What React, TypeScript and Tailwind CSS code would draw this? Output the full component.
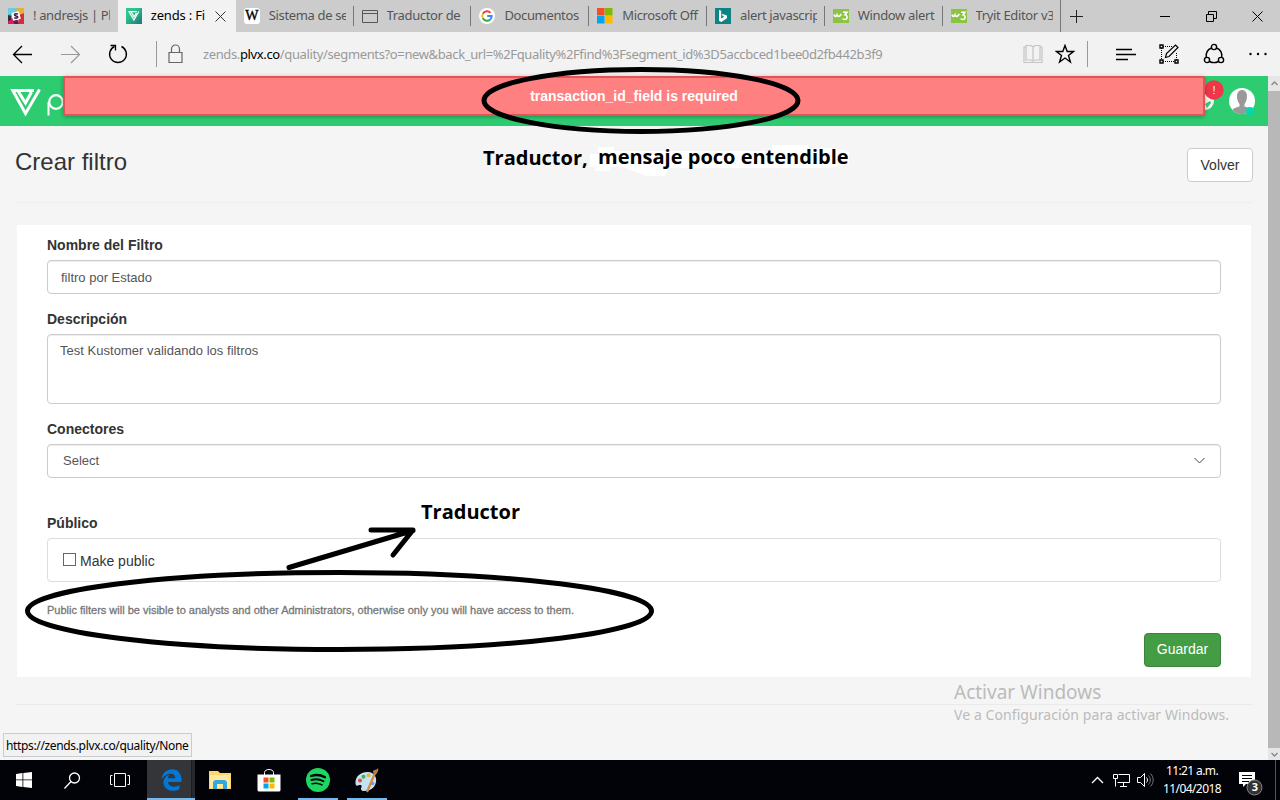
import React from "react";

type TabItem = { title: string; icon: React.ReactNode; active?: boolean; divider?: boolean };

const Slack = () => (
  <svg width="16" height="16" viewBox="0 0 16 16">
    <path d="M0 0h5l3 8-8 3z" fill="#2bb3a3" />
    <path d="M5 0h11v5L8 8z" fill="#ecb32d" />
    <path d="M0 0h9l-1 4-8 3z" fill="#6ecadc" />
    <path d="M9 0h7v5l-6-1z" fill="#e8b02c" />
    <path d="M16 5v11h-6l1-9z" fill="#d72b3f" />
    <path d="M0 11l8-2 3 7H0z" fill="#e01765" />
    <path d="M0 7l3 1v4l-3 1z" fill="#2b2f3a" />
    <path d="M5 12l4-1 1.500 5H6.500z" fill="#5a1f3a" />
    <rect x="4" y="4" width="8" height="8" rx="0.500" fill="#fff" transform="rotate(-14 8 8)" />
    <path d="M10 6.200C8.700 5.500 6.500 5.600 6.500 6.900c0 1.300 3.300.7 3.300 2.100 0 1.300-2.100 1.400-3.500.7" stroke="#3a1538" strokeWidth="1.500" fill="none" />
  </svg>
);
const PlvxFav = () => (
  <svg width="16" height="16" viewBox="0 0 16 16">
    <defs>
      <linearGradient id="fav" x1="0" y1="0" x2="1" y2="1">
        <stop offset="0.300" stopColor="#2fc58c" />
        <stop offset="0.900" stopColor="#22807c" />
      </linearGradient>
    </defs>
    <rect width="16" height="16" fill="url(#fav)" />
    <path d="M10.800 3.700H3L7.900 12l4.900-8.500M5.300 4.200L8 8.800l2.400-3.600" stroke="#fff" strokeWidth="1.200" fill="none" />
  </svg>
);
const Wiki = () => (
  <span className="flex h-4 w-4 items-center justify-center rounded-[3px] bg-white font-['Liberation_Serif',serif] text-[14px] leading-none text-black [-webkit-text-stroke:0.4px_#000]">W</span>
);
const PageIcon = () => (
  <svg width="16" height="13" viewBox="0 0 16 13" fill="none" stroke="#555">
    <path d="M.5.5h15v12H.5zM.5 3.500h15" />
  </svg>
);
const Google = () => (
  <svg width="16" height="16" viewBox="0 0 16 16">
    <circle cx="8" cy="8" r="8" fill="#fff" />
    <g fill="none" strokeWidth="2">
      <path d="M11.500 4.800A4.700 4.700 0 0 0 3.900 5.700" stroke="#ea4335" />
      <path d="M3.900 5.700a4.700 4.700 0 0 0 0 4.600" stroke="#fbbc05" />
      <path d="M3.900 10.300a4.700 4.700 0 0 0 7.300 1.200" stroke="#34a853" />
      <path d="M11.200 11.500A4.700 4.700 0 0 0 12.700 8H8.200" stroke="#4285f4" />
    </g>
  </svg>
);
const MsFlag = () => (
  <svg width="16" height="16" viewBox="0 0 16 16">
    <path d="M0 0h7.500v7.500H0z" fill="#f25022" />
    <path d="M8 0h7.500v7.500H8z" fill="#7fba00" />
    <path d="M0 8h7.500v7.500H0z" fill="#00a4ef" />
    <path d="M8 8h7.500v7.500H8z" fill="#ffb900" />
  </svg>
);
const Bing = () => (
  <svg width="16" height="16" viewBox="0 0 16 16">
    <rect width="16" height="16" fill="#0c8484" />
    <path d="M4 2l2.200.8v7.600l3-1.700-1.500-.7-1-2.300 5.300 1.900v2.700L6.200 14 4 12.700z" fill="#fff" />
  </svg>
);
const W3 = () => (
  <svg width="16" height="14" viewBox="0 0 16 14">
    <rect width="16" height="14" fill="#8ac440" />
    <path d="M1 5.500c.5 2.500 2 2.500 3 .3.600 2.200 2.500 2.200 4.300-.8M10 3.200h4l-2 2.600c3 .2 2.600 4.700-.3 4.700-1 0-1.700-.4-2-1" stroke="#fff" strokeWidth="1.600" fill="none" />
  </svg>
);

const tabs: TabItem[] = [
  { title: "! andresjs | Pla", icon: <Slack /> },
  { title: "zends : Fi", icon: <PlvxFav />, active: true },
  { title: "Sistema de se", icon: <Wiki />, divider: true },
  { title: "Traductor de", icon: <PageIcon />, divider: true },
  { title: "Documentos", icon: <Google />, divider: true },
  { title: "Microsoft Off", icon: <MsFlag />, divider: true },
  { title: "alert javascrip", icon: <Bing />, divider: true },
  { title: "Window alert", icon: <W3 />, divider: true },
  { title: "Tryit Editor v3", icon: <W3 /> },
];

function Tab({ tab }: { tab: TabItem }) {
  return (
    <div className={tab.active ? "flex h-8 w-[118px] shrink-0 items-center bg-[#f2f2f2] pl-2 text-black" : "flex h-8 w-[117.8px] shrink-0 items-center pl-2 text-[#555]"}>
      <span className="flex w-4 justify-center">{tab.icon}</span>
      <span className={tab.active ? "ml-[9px] w-[62px] overflow-hidden whitespace-nowrap tracking-[-0.2px]" : "ml-[9px] w-[77px] overflow-hidden whitespace-nowrap"}>{tab.title}</span>
      {tab.active && (
        <svg className="ml-[2px]" width="11" height="11" viewBox="0 0 11 11" stroke="#333" fill="none">
          <path d="M.5.5l10 10M10.500.5l-10 10" />
        </svg>
      )}
      {tab.divider && <span className="ml-auto h-5 w-px bg-[#777]" />}
    </div>
  );
}

function TabStrip() {
  return (
    <div className="flex h-8 items-center bg-[#ccc] text-[13px] tracking-[-0.35px]">
      {tabs.map((t) => (
        <Tab key={t.title} tab={t} />
      ))}
      <span className="h-8 w-px bg-[#777]" />
      <svg className="ml-[9px]" width="13" height="13" viewBox="0 0 13 13" stroke="#222">
        <path d="M6.500 0v13M0 6.500h13" />
      </svg>
      <svg className="ml-[77px]" width="10" height="11" viewBox="0 0 10 11" stroke="#000">
        <path d="M0 5.500h10" />
      </svg>
      <svg className="ml-9" width="11" height="11" viewBox="0 0 11 11" stroke="#000" fill="none">
        <path d="M.5 3.500h7v7h-7zM2.500 3.500v-3h8v7h-3" />
      </svg>
      <svg className="ml-[35px]" width="11" height="11" viewBox="0 0 11 11" stroke="#000">
        <path d="M.5.5l10 10M10.500.5l-10 10" />
      </svg>
    </div>
  );
}

function AddressBar() {
  return (
    <div className="flex h-11 items-center bg-[#f2f2f2] pl-3">
      <svg width="120" height="26" viewBox="0 0 120 26" fill="none">
        <path d="M20 13.500H1.500M10 5l-8.500 8.500L10 22" stroke="#000" strokeWidth="1.300" />
        <path d="M49 13.500h18.500M59 5l8.500 8.500L59 22" stroke="#999" strokeWidth="1.200" />
        <path d="M102.500 5.500A8.400 8.400 0 1 0 109.500 5.500" stroke="#000" strokeWidth="1.400" />
        <path d="M98.500 4.500h5v5" stroke="#000" strokeWidth="1.300" />
      </svg>
      <span className="ml-6 h-[26px] w-px bg-[#999]" />
      <svg className="ml-[11px]" width="15" height="20" viewBox="0 0 15 20" fill="none" stroke="#666" strokeWidth="1.200">
        <path d="M1 8.500h13v10H1zM3.500 8.500V5a4 4 0 0 1 8 0v3.500" />
      </svg>
      <span className="ml-5 mt-[2px] w-[800px] whitespace-nowrap text-[13px] tracking-[-0.37px] text-[#999]">
        zends.<span className="text-black">plvx.co</span>/quality/segments?o=new&amp;back_url=%2Fquality%2Ffind%3Fsegment_id%3D5accbced1bee0d2fb442b3f9
      </span>
      <svg className="ml-5 shrink-0" width="20" height="20" viewBox="0 0 20 20" fill="none" stroke="#c4c4c4" strokeWidth="1.200">
        <path d="M3 3H1v15.500h18V3h-2M10 3v13M3 1.500h5L10 3l2-1.500h5V16h-5l-2 1-2-1H3z" />
      </svg>
      <svg className="ml-3 shrink-0" width="20" height="20" viewBox="0 0 20 20" fill="none" stroke="#000" strokeWidth="1.400">
        <path d="M10 1.500l2.200 6h6.300l-5 4 1.900 6.500-5.400-4-5.400 4 1.900-6.500-5-4h6.300z" />
      </svg>
      <span className="ml-3 h-[26px] w-px shrink-0 bg-[#999]" />
      <svg className="-mt-px ml-7 shrink-0" width="21" height="14" viewBox="0 0 21 14" stroke="#000" strokeWidth="1.400">
        <path d="M0 2.500h16M0 7.500h20M0 12.500h12" />
      </svg>
      <svg className="ml-[22px] shrink-0" width="20" height="20" viewBox="0 0 20 20" fill="none" stroke="#000">
        <path d="M4 2.500h9M2.500 4v12M4 17.500h12M17.500 9v7" strokeDasharray="1 1" />
        <path d="M1 1h3v3H1zM1 16h3v3H1zM16 16h3v3h-3z" strokeWidth="1.400" />
        <path d="M6.500 13.500l1-4L16.500 1l2.500 2.500L10 12.500z" strokeWidth="1.200" />
      </svg>
      <svg className="ml-6 shrink-0" width="22" height="22" viewBox="0 0 22 22" fill="none" stroke="#000" strokeWidth="1.400">
        <circle cx="11" cy="4" r="2.600" />
        <circle cx="4" cy="17" r="2.600" />
        <circle cx="18" cy="17" r="2.600" />
        <path d="M8.500 5C4.500 6.500 2.800 10 3.200 14.300M13.500 5c4 1.500 5.700 5 5.300 9.300M6.500 18.500c3 1.500 6 1.500 9 0" />
      </svg>
      <svg className="ml-6 shrink-0" width="18" height="4" viewBox="0 0 18 4">
        <circle cx="1.500" cy="2" r="1.200" />
        <circle cx="9" cy="2" r="1.200" />
        <circle cx="16.500" cy="2" r="1.200" />
      </svg>
    </div>
  );
}

function SiteHeader() {
  return (
    <header className="relative flex h-[50px] items-start bg-[#2ecc71]">
      <svg width="110" height="50" viewBox="0 0 110 50" fill="none" stroke="#fff">
        <path d="M34 14.500H12.800L25.500 37.500 39.500 13.500M18 15l7.500 12 6-11" strokeWidth="3" />
        <circle cx="56" cy="26" r="6.800" strokeWidth="2.200" />
        <path d="M48.500 26v13.500" strokeWidth="2" />
      </svg>
      <svg className="ml-auto" width="70" height="50" viewBox="0 0 70 50">
        <circle cx="7" cy="25" r="9" fill="#f2f4ef" />
        <path d="M7 28l5-3 1 2-4 5z" fill="#2ecc71" />
        <circle cx="16" cy="14" r="9.700" fill="#f0364a" />
        <circle cx="44" cy="25" r="13" fill="#fff" />
        <path d="M39 20c0-8 10-8 10 0 0 4-1 6-2.500 8v2.500c4 1 6 2 7 3.500a13 13 0 0 1-19 0c1-1.500 3-2.500 7-3.500V28c-1.500-2-2.500-4-2.500-8z" fill="#999" />
        <circle cx="52" cy="35" r="4" fill="#00d8b4" />
      </svg>
      <span className="absolute right-[50px] top-[6px] w-2 text-center text-[11px] leading-4 text-white">!</span>
      <div className="absolute left-[63px] top-0 flex h-10 w-[1142px] items-center justify-center rounded-[2px] border-2 border-[#e05656] bg-[#ff8080] text-[14px] font-bold text-white shadow-[0_1px_4px_rgba(0,0,0,0.3)]">
        transaction_id_field is required
      </div>
    </header>
  );
}

const field = "rounded-[4px] border border-[#ccc] bg-white text-[13px] text-[#555] shadow-[inset_0_1px_1px_rgba(0,0,0,0.075)]";
const label = "text-[14px] font-bold leading-5 text-[#333]";

function FilterForm() {
  return (
    <section className="mx-[17px] mt-[22px] flex h-[452px] flex-col bg-white px-[30px] pt-[10px]">
      <div className={label}>Nombre del Filtro</div>
      <div className={`mt-[5px] flex h-[34px] items-center pl-[13px] pt-[2px] ${field}`}>filtro por Estado</div>
      <div className={`mt-[15px] ${label}`}>Descripción</div>
      <div className={`mt-[5px] h-[70px] pl-3 pt-[6px] leading-5 tracking-[0.03px] ${field}`}>Test Kustomer validando los filtros</div>
      <div className={`mt-[15px] ${label}`}>Conectores</div>
      <div className={`mt-[5px] flex h-[34px] items-center justify-between pl-[15px] pr-[14px] ${field}`}>
        Select
        <svg width="13" height="8" viewBox="0 0 13 8" fill="none" stroke="#444">
          <path d="M1.500 1l5 5 5-5" />
        </svg>
      </div>
      <div className={`mt-[35px] ${label}`}>Público</div>
      <div className="mt-[5px] flex h-11 items-center rounded-[4px] border border-[#ddd] pl-[15px] text-[14px] text-[#333]">
        <span className="mb-[2px] h-[13px] w-[13px] border border-[#666] bg-white" />
        <span className="ml-1 mt-[2px]">Make public</span>
      </div>
      <div className="mt-[18px] whitespace-nowrap text-[11px] leading-5 text-[#777] [-webkit-text-stroke:0.3px_#777]">
        Public filters will be visible to analysts and other Administrators, otherwise only you will have access to them.
      </div>
      <div className="mt-[13px] flex h-[34px] w-[77px] items-center justify-center self-end rounded-[4px] border border-[#398439] bg-[#449d44] pb-px text-[14px] text-white">Guardar</div>
    </section>
  );
}

function ScrollBar() {
  return (
    <div className="flex w-3 flex-col bg-[#b8b8b8]">
      <div className="flex h-[15px] items-center justify-center bg-[#e6e6e6]">
        <svg width="7" height="5" viewBox="0 0 7 5" fill="none" stroke="#888" strokeWidth="1.300">
          <path d="M.5 4l3-3 3 3" />
        </svg>
      </div>
      <div className="mt-auto flex h-3 items-center justify-center bg-[#e6e6e6]">
        <svg width="7" height="5" viewBox="0 0 7 5" fill="none" stroke="#888" strokeWidth="1.300">
          <path d="M.5 1l3 3 3-3" />
        </svg>
      </div>
    </div>
  );
}

function Annotations() {
  return (
    <>
      <svg className="pointer-events-none absolute left-0 top-0" width="1280" height="800" viewBox="0 0 1280 800" fill="none">
        <path d="M590 154h8v-7h16v4h158v-6h36v3h28l13 4v12l-19 4H668l-3 8h-18l-24-9h-13v4h-15v-4h-5z" fill="#fff" />
        <g stroke="#000" strokeWidth="5" strokeLinecap="round">
          <ellipse cx="641" cy="100.500" rx="157" ry="31" />
          <ellipse cx="339.500" cy="611" rx="312" ry="38.500" />
          <path d="M289 567.500L413 530.500M371 530h42l-20 25" strokeLinejoin="round" />
        </g>
      </svg>
      <div className="absolute left-[483px] top-[144px] whitespace-nowrap font-['Open_Sans',sans-serif] text-[20px] font-bold leading-7 text-black">Traductor,</div>
      <div className="absolute left-[598px] top-[143px] whitespace-nowrap font-['Open_Sans',sans-serif] text-[20px] font-bold leading-7 text-black">mensaje poco entendible</div>
      <div className="absolute left-[421px] top-[498px] whitespace-nowrap font-['Open_Sans',sans-serif] text-[20px] font-bold leading-7 text-black">Traductor</div>
    </>
  );
}

function TaskBar() {
  return (
    <div className="flex h-10 items-center bg-[#010308] text-white">
      <svg className="ml-4" width="16" height="16" viewBox="0 0 16 16" fill="#fff">
        <path d="M0 2l6.500-1v6.500H0zM7.300.900L16 0v7.500H7.300zM0 8.300h6.500V15L0 14zM7.300 8.300H16V16l-8.700-1z" />
      </svg>
      <svg className="ml-8" width="17" height="17" viewBox="0 0 17 17" fill="none" stroke="#fff" strokeWidth="1.300">
        <circle cx="10.500" cy="6" r="5" />
        <path d="M7 9.500L.5 16.500" />
      </svg>
      <svg className="ml-[29px]" width="20" height="14" viewBox="0 0 20 14" fill="none" stroke="#fff">
        <path d="M4.500.5h11v13h-11zM2.500 2.500h-2v9h2M17.500 2.500h2v9h-2" />
      </svg>
      <div className="ml-[17px] flex h-10 w-12 items-center border-b-2 border-[#76b9ed] bg-[#333539] pl-[14px]">
        <svg className="mt-[2px]" width="21" height="22" viewBox="0 0 21 22" fill="#0078d7">
          <path d="M.5 10C2-2.500 20-3.500 20.500 10v3H7c.5 5 7 6 11.500 3v4.300C11 24 2.500 20.500 2.500 13.500 2.500 9.500 5 6.800 8.500 5.500 7.300 6.800 7 8.300 7 9.300h7.300C14.300 3 5.500 3.500.5 10z" />
        </svg>
        <span className="ml-auto h-full w-[4px] border-l border-[#1c1d20] bg-[#27292d]" />
      </div>
      <svg className="ml-[14px]" width="22" height="20" viewBox="0 0 22 20">
        <path d="M0 1h9l2 2h11v16H0z" fill="#fdd56a" />
        <path d="M1 5h20v13H1z" fill="#ffe9a0" />
        <path d="M4 19v-7l2-2h10l2 2v7h-4v-5H8v5z" fill="#33a8e0" />
      </svg>
      <svg className="ml-[26px]" width="24" height="24" viewBox="0 0 24 24">
        <path d="M7.500 7V4.500C7.500.500 16.500.500 16.500 4.500V7" fill="none" stroke="#fff" />
        <path d="M.5 6.500h23V22a1.500 1.500 0 0 1-1.500 1.500H2A1.500 1.500 0 0 1 .5 22z" fill="#fff" />
        <path d="M6.500 9.500h5v5h-5z" fill="#f25022" />
        <path d="M12.500 9.500h5v5h-5z" fill="#7fba00" />
        <path d="M6.500 15.500h5v5h-5z" fill="#00a4ef" />
        <path d="M12.500 15.500h5v5h-5z" fill="#ffb900" />
      </svg>
      <div className="ml-[17px] flex h-10 w-10 items-center justify-center border-b-2 border-[#76b9ed] pt-[2px]">
        <svg width="24" height="24" viewBox="0 0 24 24" fill="none" stroke="#010308" strokeLinecap="round">
          <circle cx="12" cy="12" r="12" fill="#1ed760" stroke="none" />
          <path d="M5 8c4.500-1.500 10-1 14 1.300" strokeWidth="2.300" />
          <path d="M5.500 12c4-1.200 8.500-.7 12 1.300" strokeWidth="1.900" />
          <path d="M6 15.700c3.500-1 7-.6 10 1.200" strokeWidth="1.500" />
        </svg>
      </div>
      <div className="ml-[9px] flex h-10 w-10 items-center justify-center border-b-2 border-[#76b9ed] pt-[2px]">
        <svg width="26" height="25" viewBox="0 0 26 25">
          <path d="M1.500 15C1 8 8 3.500 14 4c6 .5 9 5 8 10-1 6-6 9-12 9-3 0-3.500-2-2.500-4S6 16.500 4 17.500 1.500 16.500 1.500 15z" fill="#c5e2f3" />
          <circle cx="6" cy="12.500" r="2" fill="#e64a3b" />
          <circle cx="9.500" cy="8.700" r="2" fill="#46ad4b" />
          <circle cx="14.500" cy="7.200" r="2" fill="#f0b51e" />
          <circle cx="18.500" cy="15.500" r="1.800" fill="#6f9ade" />
          <path d="M21 5L13 24" stroke="#d88a3d" strokeWidth="2.200" />
          <path d="M19 4c0-3 3-1 5-4 1 3-1 6-3.500 7z" fill="#b9784a" />
        </svg>
      </div>
      <svg className="ml-auto" width="13" height="8" viewBox="0 0 13 8" fill="none" stroke="#fff" strokeWidth="1.400">
        <path d="M1 7l5.500-5.500L12 7" />
      </svg>
      <svg className="ml-[9px]" width="17" height="14" viewBox="0 0 17 14" fill="none" stroke="#fff">
        <path d="M5.500 1.500h11v8h-12M10.500 9.500v4M7 13.500h7M.5 1.500h4v4h-4zM2.500 5.500v8" />
      </svg>
      <svg className="ml-[7px]" width="17" height="14" viewBox="0 0 17 14" fill="none" stroke="#fff">
        <path d="M.5 4.500h3l4-4v13l-4-4h-3z" />
        <path d="M9.500 4.500c1.300 1.500 1.300 3.500 0 5" />
        <path d="M11.500 2.500c2.500 2.700 2.500 6.300 0 9M13.500.5c3.600 4 3.600 9 0 13" stroke="#777" />
      </svg>
      <div className="ml-[5px] w-[66px] whitespace-nowrap text-center text-[12px] leading-[18px] tracking-[-0.6px]">
        <div>11:21 a.m.</div>
        <div>11/04/2018</div>
      </div>
      <div className="relative ml-[14px] mr-3 mt-2 h-6 w-6">
        <svg width="24" height="26" viewBox="0 0 24 26">
          <path d="M0 0h16v12H7l-3 3v-3H0z" fill="#fff" />
          <path d="M3 3.500h10M3 6.500h10M3 9.500h7" stroke="#010308" />
          <circle cx="15.500" cy="15.500" r="7.500" fill="#333" stroke="#888" />
        </svg>
        <span className="absolute left-[12px] top-[7px] w-2 text-center text-[11px] font-bold leading-4">3</span>
      </div>
      <span className="mr-1 h-10 w-px bg-[#555]" />
    </div>
  );
}

export default function App() {
  return (
    <div className="relative flex h-[800px] w-[1280px] flex-col overflow-hidden font-['Noto_Sans','Open_Sans',sans-serif]">
      <TabStrip />
      <AddressBar />
      <div className="flex h-[684px]">
        <main className="relative w-[1268px] bg-[#f5f5f5] font-['Liberation_Sans',Arial,sans-serif] text-[#333]">
          <SiteHeader />
          <div className="mx-[15px] flex h-[77px] items-start justify-between border-b border-[#eee] pt-[22px]">
            <h1 className="text-[24px] leading-7">Crear filtro</h1>
            <span className="flex h-[34px] w-[66px] items-center justify-center rounded-[4px] border border-[#ccc] bg-white text-[14px]">Volver</span>
          </div>
          <FilterForm />
          <div className="mx-[15px] mt-[27px] border-t border-[#eaeaea]" />
          <div className="absolute left-[954px] top-[603px] whitespace-nowrap font-['Noto_Sans',sans-serif] text-[#bbb]">
            <div className="text-[19px] leading-[26px]">Activar Windows</div>
            <div className="text-[14px] leading-5 tracking-[0.08px]">Ve a Configuración para activar Windows.</div>
          </div>
          <div className="absolute left-[3px] top-[657px] flex h-6 w-[189px] items-center whitespace-nowrap border border-[#ccc] bg-[#f2f2f2] pl-[2px] pt-px font-['Noto_Sans',sans-serif] text-[12px] tracking-[-0.35px] text-black">https://zends.plvx.co/quality/None</div>
        </main>
        <ScrollBar />
      </div>
      <TaskBar />
      <Annotations />
    </div>
  );
}
